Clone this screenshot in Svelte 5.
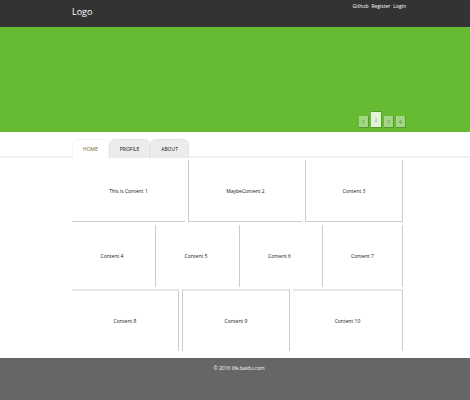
<script>
  const links = ['Github', 'Register', 'Login'];
  const slides = [1, 2, 3, 4];
  const tabs = ['HOME', 'PROFILE', 'ABOUT'];
  let slide = $state(2);
  let tab = $state('HOME');
</script>

<div class="page">
  <header>
    <div class="wrap top">
      <a class="logo" href="#home">Logo</a>
      <nav class="links">
        {#each links as link}
          <a href="#{link}">{link}</a>
        {/each}
      </nav>
    </div>
  </header>

  <section class="banner">
    <div class="wrap pager">
      {#each slides as n}
        <button class:current={slide === n} onclick={() => (slide = n)}>{n}</button>
      {/each}
    </div>
  </section>

  <nav class="tabbar">
    <div class="wrap tabs">
      {#each tabs as name}
        <button class:active={tab === name} onclick={() => (tab = name)}>{name}</button>
      {/each}
    </div>
  </nav>

  <main class="wrap">
    <div class="row first">
      <div>This is Content 1</div>
      <div>MaybeContent 2</div>
      <div>Content 3</div>
    </div>
    <div class="row second">
      <div>Content 4</div>
      <div>Content 5</div>
      <div>Content 6</div>
      <div>Content 7</div>
    </div>
    <div class="row third">
      <div>Content 8</div>
      <div>Content 9</div>
      <div>Content 10</div>
    </div>
  </main>

  <footer>© 2016 life.baidu.com</footer>
</div>

<style>
  :global(body) {
    margin: 0;
    background: #666;
  }
  .page {
    background: #fff;
    color: #111;
    font: 5px/8px "Open Sans", "Noto Sans", sans-serif;
  }
  .page * {
    box-sizing: border-box;
  }
  a {
    color: inherit;
    text-decoration: none;
  }
  button {
    border: 0;
    padding: 0;
    font: inherit;
    color: inherit;
    cursor: pointer;
  }
  .wrap {
    margin: 0 64px 0 72px;
  }
  header {
    background: #333;
    color: #fff;
    height: 27px;
  }
  .top {
    display: flex;
    justify-content: space-between;
  }
  .logo {
    font-size: 9px;
    font-weight: 500;
    line-height: 24px;
  }
  .links {
    display: flex;
    gap: 3px;
    padding-top: 2px;
  }
  .banner {
    display: flex;
    flex-direction: column;
    justify-content: flex-end;
    height: 105px;
    padding-bottom: 4px;
    background: #66bb33;
  }
  .pager {
    display: flex;
    justify-content: flex-end;
    align-items: flex-end;
    gap: 2px;
  }
  .pager button {
    width: 10px;
    height: 12px;
    background: #a3d685;
    border-right: 1px solid #559a2e;
    border-bottom: 1px solid #559a2e;
    color: #5d8748;
  }
  .pager .current {
    width: 11px;
    height: 17px;
    background: #e2f3d9;
    border-top: 1px solid #559a2e;
    color: #8aa37c;
  }
  .tabbar {
    padding-top: 7px;
    background: linear-gradient(#f0f0f0, #f0f0f0) bottom / 100% 2px no-repeat;
  }
  .tabs {
    display: flex;
  }
  .tabs button {
    height: 19px;
    padding: 0 10px;
    background: #ececec;
    border: 1px solid #e4e4e4;
    border-bottom: 0;
    border-radius: 6px 6px 0 0;
  }
  .tabs .active {
    background: #fff;
    border-color: #f4f4f4;
    color: #6b6a1c;
  }
  main {
    padding: 2px 3px 7px 0;
  }
  .row {
    display: grid;
    column-gap: 3px;
  }
  .row > div {
    display: flex;
    align-items: center;
    justify-content: center;
    height: 62px;
    border: 0 solid #ccc;
  }
  .row > div:last-child {
    border-right-width: 1px;
  }
  .first {
    grid-template-columns: 113fr 114fr 98fr;
    margin-bottom: 3px;
  }
  .first > div {
    border-bottom-width: 1px;
  }
  .first > div + div,
  .second > div + div {
    border-left-width: 1px;
  }
  .second {
    grid-template-columns: 80fr 81fr 80fr 81fr;
    margin-bottom: 2px;
  }
  .third {
    grid-template-columns: 107fr 108fr 110fr;
  }
  .third > div {
    border-top: 2px solid #e8e8e8;
    border-right-width: 1px;
  }
  .third > div:nth-child(2) {
    border-left-width: 1px;
  }
  footer {
    min-height: 42px;
    padding: 6px 0 0 8px;
    background: #666;
    color: #fff;
    text-align: center;
  }
</style>
